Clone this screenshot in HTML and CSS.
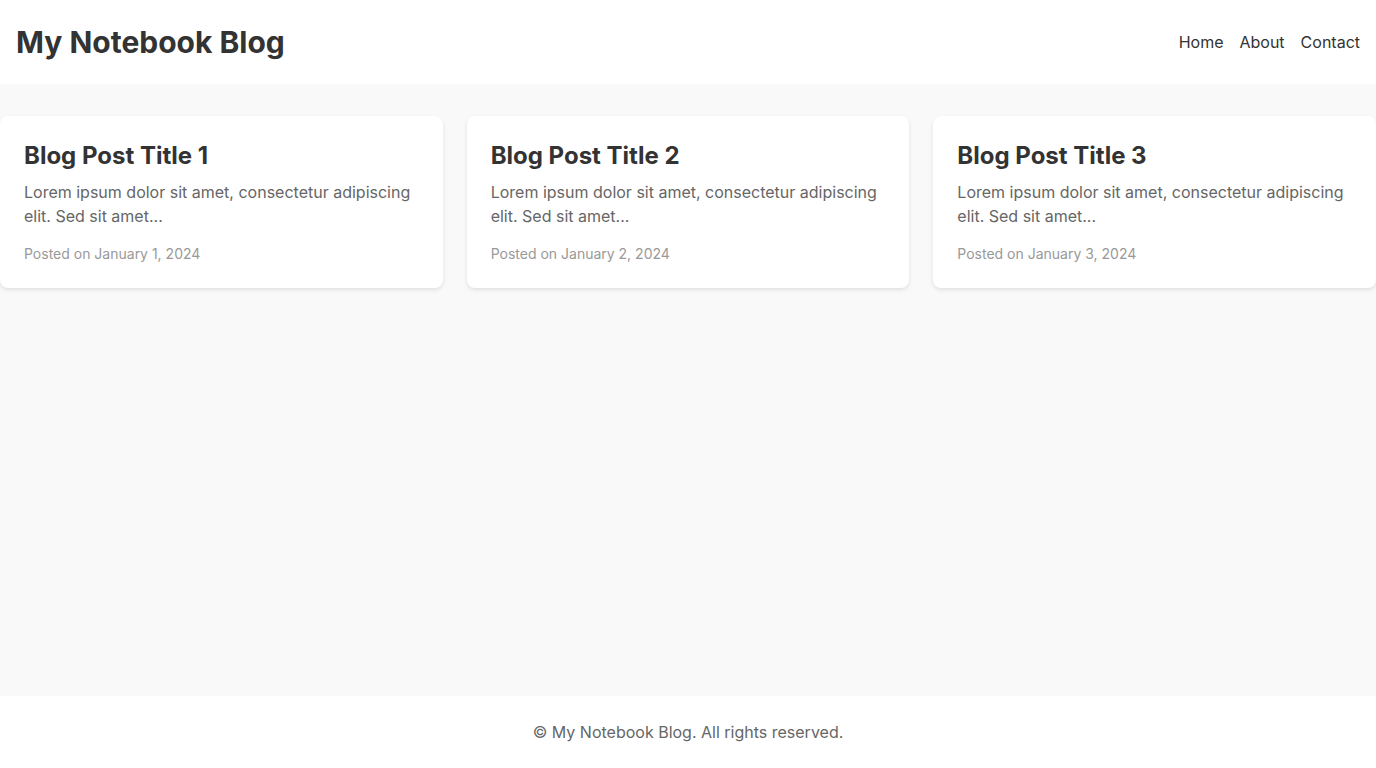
FILE: index.html
```html
<!DOCTYPE html>
<html lang="en">
<head>
<meta charset="utf-8">
<title>My Notebook Blog</title>
<link rel="stylesheet" href="styles.css">
</head>
<body>
<header class="site-header">
  <h1 class="site-title">My Notebook Blog</h1>
  <nav class="site-nav">
    <a href="#">Home</a>
    <a href="#">About</a>
    <a href="#">Contact</a>
  </nav>
</header>
<main class="content">
  <div class="post-grid">
    <article class="post-card">
      <h2 class="post-title">Blog Post Title 1</h2>
      <p class="post-excerpt">Lorem ipsum dolor sit amet, consectetur adipiscing elit. Sed sit amet...</p>
      <p class="post-date">Posted on January 1, 2024</p>
    </article>
    <article class="post-card">
      <h2 class="post-title">Blog Post Title 2</h2>
      <p class="post-excerpt">Lorem ipsum dolor sit amet, consectetur adipiscing elit. Sed sit amet...</p>
      <p class="post-date">Posted on January 2, 2024</p>
    </article>
    <article class="post-card">
      <h2 class="post-title">Blog Post Title 3</h2>
      <p class="post-excerpt">Lorem ipsum dolor sit amet, consectetur adipiscing elit. Sed sit amet...</p>
      <p class="post-date">Posted on January 3, 2024</p>
    </article>
  </div>
</main>
<footer class="site-footer">
  <p>© My Notebook Blog. All rights reserved.</p>
</footer>
</body>
</html>
```
FILE: styles.css
```css
* { box-sizing: border-box; }
html, body { margin: 0; padding: 0; }
body {
  font-family: Inter, "Noto Sans", sans-serif;
  color: #333;
  background: #f9f9f9;
  min-height: 100vh;
  display: flex;
  flex-direction: column;
}
.site-header {
  background: #fff;
  display: flex;
  justify-content: space-between;
  align-items: center;
  padding: 24px 16px;
}
.site-title {
  margin: 0;
  font-size: 30px;
  line-height: 36px;
  font-weight: 700;
  color: #333;
}
.site-nav {
  display: flex;
  gap: 16px;
}
.site-nav a {
  color: #333;
  text-decoration: none;
  font-size: 16px;
  line-height: 24px;
}
.content {
  flex: 1;
  padding: 32px 0;
}
.post-grid {
  display: grid;
  grid-template-columns: repeat(3, 1fr);
  gap: 24px;
}
.post-card {
  background: #fff;
  border-radius: 8px;
  padding: 24px;
  box-shadow: 0 2px 4px rgba(0,0,0,0.1);
}
.post-title {
  margin: 0 0 8px;
  font-size: 24px;
  line-height: 32px;
  font-weight: 700;
  color: #333;
}
.post-excerpt {
  margin: 0;
  font-size: 16px;
  line-height: 24px;
  color: #666;
}
.post-date {
  margin: 16px 0 0;
  font-size: 14px;
  line-height: 20px;
  color: #999;
}
.site-footer {
  background: #fff;
  padding: 24px;
  text-align: center;
}
.site-footer p {
  margin: 0;
  font-size: 16px;
  line-height: 24px;
  color: #666;
}
```
